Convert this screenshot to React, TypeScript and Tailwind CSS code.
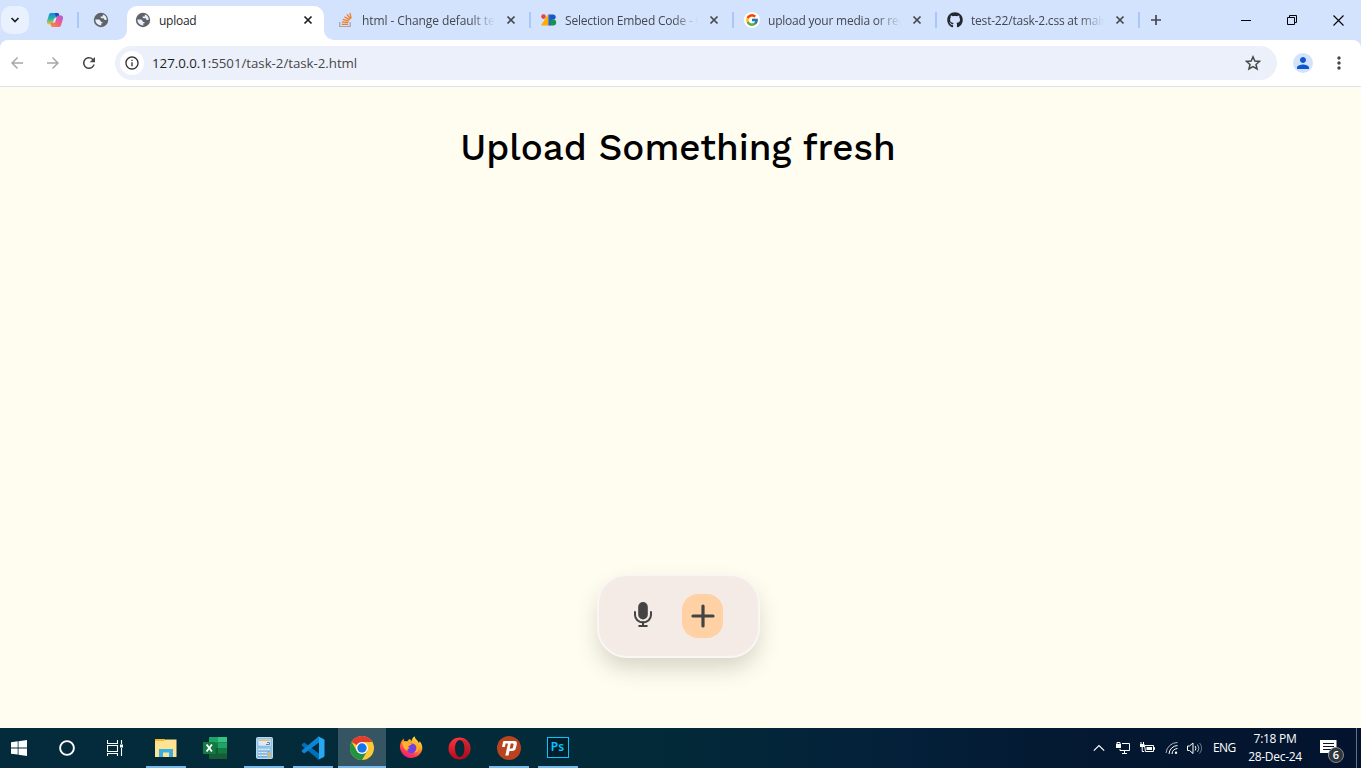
import type { ReactNode } from "react";
import { FcGoogle } from "react-icons/fc";
import { FaGithub } from "react-icons/fa";
import { MdArrowBack, MdArrowForward, MdRefresh, MdMoreVert, MdPerson, MdInfoOutline } from "react-icons/md";

const Globe = () => (
  <svg width="16" height="16" viewBox="0 0 16 16" className="shrink-0">
    <circle cx="8" cy="8" r="7.2" fill="#5f6368" />
    <path d="M9.900 2.500a5.800 5.800 0 0 1 3.900 5.300l-1.700.1-.9-.5-.5-1.200H8.400L7.600 5.500V4.600h2.100ZM2.300 7.600h4l1.500 1.500v1h1.700v1.200H8.300v2.300a5.900 5.900 0 0 1-6-6Z" fill="#e8eefa" />
  </svg>
);

const Close = ({ dark = false }: { dark?: boolean }) => (
  <svg width="16" height="16" viewBox="0 0 16 16" className="shrink-0">
    <path d="m4.500 4.500 7 7m0-7-7 7" stroke={dark ? "#1f1f1f" : "#45484d"} strokeWidth="1.700" />
  </svg>
);

const Copilot = () => (
  <svg width="18" height="16" viewBox="0 0 18 16">
    <defs>
      <linearGradient id="cpa" x1="0" y1="0" x2="0" y2="1"><stop stopColor="#1686ea" /><stop offset=".5" stopColor="#28b6a4" /><stop offset="1" stopColor="#f4c52c" /></linearGradient>
      <linearGradient id="cpb" x1="1" y1="0" x2="0" y2="1"><stop stopColor="#ad5be8" /><stop offset=".5" stopColor="#f35d83" /><stop offset="1" stopColor="#ff8c35" /></linearGradient>
    </defs>
    <path d="M5 1h6.200c1 0 1.500.7 1.800 1.600L13.600 5H11c-1.500 0-2 .9-2.400 2.100L7.400 11c-.4 1-.9 1.400-1.800 1.400H3.200C.8 12.400.8 10 1.200 8.500L3 2.700C3.300 1.700 4 1 5 1Z" fill="url(#cpa)" />
    <path d="M9 1h2.200c1 0 1.500.7 1.800 1.600L13.600 5H11C9.500 5 9.100 2 9 1Z" fill="#1b4ac1" />
    <path d="M13 15H6.800c-1 0-1.500-.7-1.800-1.600L4.400 11H7c1.500 0 2-.9 2.400-2.100L10.600 5c.4-1 .9-1.400 1.800-1.400h2.400c2.400 0 2.400 2.400 2 3.900L15 13.300c-.3 1-1 1.700-2 1.700Z" fill="url(#cpb)" />
    <path d="M8.200 6.200h2l-1.300 4h-2Z" fill="#d9e6fc" />
  </svg>
);

const StackOverflow = () => (
  <svg width="16" height="16" viewBox="0 0 16 16" fill="none">
    <path d="M1.700 10v4.500h10.500V10" stroke="#a2a5a9" strokeWidth="1.200" />
    <path d="M3.700 12.300h6.500M3.900 9.900l6.400.8M4.800 7.300l6 1.900M6.400 4.700l5.200 3.200M8.900 2.300l3.700 4.700M11.900.8l1.300 5.600" stroke="#f47b20" strokeWidth="1.250" />
  </svg>
);

const FontsMark = () => (
  <svg width="16" height="16" viewBox="0 0 16 16">
    <path d="M0 13.500 7 2.500h2v11Z" fill="#fbad03" />
    <circle cx="2.500" cy="4.600" r="2.300" fill="#ea4335" />
    <path d="M7.500 2.500h4v11h-4Z" fill="#1a63e8" />
    <circle cx="12" cy="5.100" r="2.700" fill="#1757c8" />
    <circle cx="12.200" cy="10.600" r="3" fill="#189448" />
  </svg>
);

const GoogleMark = () => (
  <span className="flex h-4 w-4 items-center justify-center rounded-full bg-white"><FcGoogle size={14} /></span>
);

const tabs: { icon: ReactNode; title: string; spacing: string }[] = [
  { icon: <StackOverflow />, title: "html - Change default text", spacing: "tracking-[-0.09px]" },
  { icon: <FontsMark />, title: "Selection Embed Code - G", spacing: "tracking-[-0.2px]" },
  { icon: <GoogleMark />, title: "upload your media or reco", spacing: "tracking-[-0.22px]" },
  { icon: <FaGithub size={16} color="#24292f" />, title: "test-22/task-2.css at main", spacing: "tracking-[-0.2px]" },
];

function TabStrip() {
  return (
    <div className="flex h-10 bg-[#d3e2fd] text-[12px]">
      <div className="flex w-[29px] items-center pl-px">
        <div className="flex h-7 w-7 items-center justify-center rounded-[10px] bg-[#eaf1fe]">
          <svg width="10" height="8" viewBox="0 0 10 8" fill="none"><path d="m1.500 2 3.500 3.500L8.500 2" stroke="#1f1f1f" strokeWidth="1.700" /></svg>
        </div>
      </div>
      <div className="flex w-[50px] items-center justify-between pl-[17px]">
        <Copilot /><span className="h-4 w-0.5 bg-[#a8c7fa]" />
      </div>
      <div className="flex w-[38px] items-center pl-[14px]"><Globe /></div>
      <div className="w-[10px] bg-white"><div className="h-10 rounded-br-[10px] bg-[#d3e2fd]" /></div>
      <div className="mt-1.5 flex w-[197px] items-center rounded-t-[10px] bg-white pb-[6px] pl-2 pr-2 text-[#1f1f1f]">
        <Globe />
        <span className="ml-2 grow pt-0.5 text-[12px] tracking-[-0.25px]">upload</span>
        <Close dark />
      </div>
      <div className="w-[10px] bg-white"><div className="h-10 rounded-bl-[10px] bg-[#d3e2fd]" /></div>
      <div className="-ml-1.5 flex">
        {tabs.map((tab) => (
          <div key={tab.title} className="flex w-[203px] items-center pl-[11px] text-[#45484d]">
            <span className="-ml-px mr-px flex w-4 shrink-0">{tab.icon}</span>
            <span className={`ml-[7px] w-[133px] overflow-hidden whitespace-nowrap pt-0.5 [mask-image:linear-gradient(to_right,black_108px,transparent_133px)] ${tab.spacing}`}>{tab.title}</span>
            <span className="ml-2"><Close /></span>
            <span className="ml-[10px] h-4 w-0.5 bg-[#a8c7fa]" />
          </div>
        ))}
      </div>
      <div className="flex w-8 items-center justify-center">
        <svg width="12" height="12" viewBox="0 0 12 12"><path d="M6 1v10M1 6h10" stroke="#45484d" strokeWidth="1.700" /></svg>
      </div>
      <div className="ml-auto flex w-[138px]">
        <span className="flex flex-1 items-center justify-center"><svg width="10" height="10"><path d="M0 5.500h10" stroke="#000" /></svg></span>
        <span className="flex flex-1 items-center justify-center"><svg width="10" height="10" fill="none" stroke="#000"><path d="M.5 2.500h7v7h-7ZM2.500 2V.5h7v7H8" /></svg></span>
        <span className="flex flex-1 items-center justify-center"><svg width="11" height="11"><path d="m.5.5 10 10m0-10-10 10" stroke="#000" strokeWidth="1.100" /></svg></span>
      </div>
    </div>
  );
}

function Toolbar() {
  return (
    <div className="h-[47px] bg-[#d3e2fd]">
      <div className="flex h-[47px] items-start rounded-t-[8px] border-b border-[#e0e2e5] bg-white pt-1.5">
        <div className="flex h-[34px] w-[115px] items-center pl-[8px]">
          <MdArrowBack size={18} color="#a6a8ab" />
          <MdArrowForward size={18} color="#a6a8ab" className="ml-[18px]" />
          <MdRefresh size={18} color="#44474a" className="ml-[18px]" />
        </div>
        <div className="flex h-[34px] w-[1162px] items-center rounded-full bg-[#ecf0fa] pl-[5px] pr-[15px]">
          <span className="flex h-6 w-6 items-center justify-center rounded-full bg-white"><MdInfoOutline size={16} color="#303134" /></span>
          <span className="ml-2 grow pt-0.5 text-[13.3px] tracking-[-0.04px] text-[#474747]"><span className="text-[#1f1f1f]">127.0.0.1</span>:5501/task-2/task-2.html</span>
          <svg width="18" height="18" viewBox="0 0 18 18" fill="none"><path d="m9 2.800 1.850 4.250 4.650.4-3.500 3.050 1.050 4.500L9 12.600 4.950 15 6 10.500 2.500 7.450l4.650-.4Z" stroke="#474747" strokeWidth="1.500" /></svg>
        </div>
        <div className="flex h-[34px] flex-1 items-center pl-4">
          <span className="flex h-5 w-5 items-center justify-center rounded-full bg-[#d3e3fd]"><MdPerson size={18} color="#0b57d0" /></span>
          <MdMoreVert size={20} color="#474747" className="ml-[16px]" />
        </div>
      </div>
    </div>
  );
}

function UploadPage() {
  return (
    <main className="flex h-[641px] flex-col items-center bg-[#fffdf0] pr-[5px]">
      <h1 className="mt-[37px] whitespace-nowrap font-['Work_Sans','Inter',sans-serif] text-[36.8px] font-medium leading-[48px] text-black">Upload Something fresh</h1>
      <div className="ml-px mt-[402px] flex h-[84px] w-[163px] rounded-[30px] border-2 border-[#faf6f3] bg-[#f5ebe6] pl-[34px] pt-[18px] shadow-[0_12px_22px_-2px_rgba(70,70,50,0.22)]">
        <svg width="20" height="28" viewBox="0 0 20 28" className="mt-[7px]" fill="none" stroke="#444" strokeWidth="2">
          <rect x="5.200" y="1" width="9.600" height="17.500" rx="4.800" fill="#444" stroke="none" />
          <path d="M2 11v3a8 7.500 0 0 0 16 0v-3" strokeLinecap="round" />
          <path d="M10 21v4M6.200 25h7.600" strokeLinecap="round" />
        </svg>
        <button className="ml-[29px] flex h-11 w-[41px] items-center justify-center rounded-[16px] bg-[#ffd1a5]" aria-label="Add">
          <svg width="24" height="24" viewBox="0 0 24 24" className="-mt-px"><path d="M12 2v20M2 12h20" stroke="#444" strokeWidth="3.200" strokeLinecap="round" /></svg>
        </button>
      </div>
    </main>
  );
}

const Explorer = () => (
  <svg width="22" height="20" viewBox="0 0 22 20">
    <path d="M0 1h10v3H0Z" fill="#f5ba25" /><path d="M0 3h9l1.500-1.500H21.500V19H0Z" fill="#ffe391" />
    <path d="M4 19v-8h14v8h-4v-4.500H8V19Z" fill="#38afe5" />
  </svg>
);
const Excel = () => (
  <svg width="24" height="22" viewBox="0 0 24 22">
    <path d="M6 0h9v11H6Z" fill="#21a366" /><path d="M15 0h9v5.500h-9Z" fill="#33c481" /><path d="M6 5.500h9V11H6Z" fill="#107c41" /><path d="M15 5.500h9V11h-9Z" fill="#21a366" />
    <path d="M6 11h18v11H6Z" fill="#185c37" /><path d="M15 11h9v5.500h-9Z" fill="#107c41" />
    <path d="M0 5h12.500v12H0Z" fill="#107c41" /><path d="m3.600 7.500 5.300 7M8.900 7.500l-5.300 7" stroke="#fff" strokeWidth="1.900" />
  </svg>
);
const Calculator = () => (
  <svg width="17" height="22" viewBox="0 0 17 22">
    <rect x=".5" y=".5" width="16" height="21" rx="1" fill="#91c3e6" stroke="#b9dbf2" />
    <path d="M2 2h13v7H2Z" fill="#d9ebf8" stroke="#8db8d8" strokeWidth=".6" /><path d="M3 3.300h11" stroke="#f2b34e" strokeWidth="1.200" /><path d="M10 7.500h3.500v-2H11" stroke="#5b83ab" fill="none" />
    <path d="M2.500 12.700h12M2.500 15.500h9M2.500 18.300h9" stroke="#e9f4fb" strokeWidth="1.800" strokeDasharray="2 1" /><path d="M2.500 14.100h12M2.500 16.900h9M2.500 19.700h9" stroke="#4d87b3" strokeWidth=".8" strokeDasharray="2 1" /><path d="M12.500 15.500h2v4.500h-2Z" fill="#f6ac42" />
  </svg>
);
const VsCode = () => (
  <svg width="24" height="24" viewBox="0 0 24 24">
    <path d="m1 8.300 1.500-1.400c.5-.4 1-.3 1.400 0L19 18.300V23L17.500 23.500 1 9.700c-.5-.4-.5-1 0-1.400Z" fill="#0070b8" />
    <path d="m1 15.700 1.500 1.400c.5.4 1 .3 1.400 0L19 5.700V1L17.500.5 1 14.300c-.5.4-.5 1 0 1.400Z" fill="#0c86d2" />
    <path d="M17.500 23.600c-.6.2-1 .1-1.500-.4.600.6 2 .2 2-1V1.800c0-1.100-1.300-1.600-2-.9.500-.5 1-.6 1.500-.4l5 2.400c.6.3 1 .8 1 1.400v15.500c0 .6-.4 1.100-1 1.400Z" fill="#27a9f1" />
  </svg>
);
const Chrome = () => (
  <svg width="24" height="24" viewBox="0 0 24 24">
    <circle cx="12" cy="12" r="12" fill="#fcc934" />
    <path d="M12 12 1.600 6A12 12 0 0 1 22.400 6H12Z" fill="#e33b2e" />
    <path d="M1.600 6A12 12 0 0 0 12 24L17.200 15 12 12 6.800 15Z" fill="#229342" />
    <circle cx="12" cy="12" r="6" fill="#fff" /><circle cx="12" cy="12" r="4.700" fill="#1a73e8" />
  </svg>
);
const Firefox = () => (
  <svg width="24" height="24" viewBox="0 0 24 24">
    <defs><linearGradient id="ff" x1=".8" y1="0" x2=".25" y2="1"><stop stopColor="#fff04a" /><stop offset=".4" stopColor="#ff9c25" /><stop offset=".75" stopColor="#ff3a52" /><stop offset="1" stopColor="#e31587" /></linearGradient></defs>
    <path d="M2.500 5 4.700 2.500 5 5l3.300.2C9.500 4 10 3.400 11 3.100L12.500 5.300c.5-2.300 1.400-4 3-5 .5 3 3.500 4 4.500 7l.5-2C23 8 23.600 10.300 23.200 13.500A11.300 11.300 0 1 1 2.500 5Z" fill="url(#ff)" />
    <circle cx="12.400" cy="12.400" r="5" fill="#7540df" />
    <path d="M3 6.500c3-1.800 5.300-.5 7 .7l3 .2c-.5 1.800-2.800 1.800-3.800 3.200l1.300 1.600c-2 .5-3 1.500-1.200 3-4-.8-5.300-5-6.300-8.700ZM13.500 5c5 1.500 6 8 1.600 11.500 4-.1 6.300-4.500 4.800-8Z" fill="#ffb12c" />
  </svg>
);
const Opera = () => (
  <svg width="24" height="23" viewBox="0 0 24 23">
    <defs><linearGradient id="op" x1="0" y1="0" x2="0" y2="1"><stop stopColor="#ff3440" /><stop offset="1" stopColor="#b9081b" /></linearGradient></defs>
    <path fillRule="evenodd" d="M11.500.5a11 11 0 1 0 0 22 11 11 0 1 0 0-22Zm.3 2.500c2.800 0 4.700 3.800 4.700 8.500s-1.900 8.500-4.700 8.500S7 16.200 7 11.500 9 3 11.800 3Z" fill="url(#op)" />
    <path d="M11.800 3c2.800 0 4.700 3.800 4.700 8.500s-1.900 8.500-4.700 8.500c3 1 5.500.3 7.200-1.200 4-4 4-10.600 0-14.600C17.300 2.700 14.800 2 11.800 3Z" fill="#8f1020" fillOpacity=".35" />
  </svg>
);
const Psiphon = () => (
  <svg width="24" height="24" viewBox="0 0 24 24">
    <circle cx="12" cy="12" r="12" fill="#b9421f" />
    <path d="M7.200 5h10.300c2.300 0 2.600 1.500 2.200 3.500l-.7 3.200c-.5 2.300-1.800 3.200-3.800 3.200h-2.700l-1 4.600H8.300l2.700-12H8.600L7.900 11H5l1-4.800C6.200 5.300 6.500 5 7.200 5Zm6.600 2.500-1.100 5h1.700c.9 0 1.300-.3 1.500-1.100l.7-3c.1-.6-.1-.9-.7-.9Z" fill="#fff" />
  </svg>
);
const Photoshop = () => (
  <span className="mb-0.5 mr-px flex h-[21px] w-[22px] items-center justify-center border border-[#00c8ff] bg-[#001e2b] pb-px font-['Noto_Sans'] text-[12px] font-semibold leading-none text-[#00c8ff]">Ps</span>
);

const apps: { name: string; icon: ReactNode; open: boolean; active?: boolean }[] = [
  { name: "explorer", icon: <Explorer />, open: true },
  { name: "excel", icon: <Excel />, open: false },
  { name: "calculator", icon: <Calculator />, open: true },
  { name: "vscode", icon: <VsCode />, open: true },
  { name: "chrome", icon: <Chrome />, open: true, active: true },
  { name: "firefox", icon: <Firefox />, open: false },
  { name: "opera", icon: <Opera />, open: false },
  { name: "psiphon", icon: <Psiphon />, open: true },
  { name: "photoshop", icon: <Photoshop />, open: true },
];

function Taskbar() {
  return (
    <footer className="flex h-10 bg-[linear-gradient(90deg,#032b3b_0%,#022a38_48%,#04203a_66%,#041831_80%,#03132e_100%)] text-[12px] text-white">
      <div className="flex w-[141px] items-center">
        <svg width="16" height="16" viewBox="0 0 16 16" fill="#fff" className="ml-[11px]"><path d="M0 2.200 6.700 1.300v6.200H0ZM7.500 1.200 16 0v7.500H7.500ZM0 8.400h6.700v6.200L0 13.700ZM7.500 8.400H16V16l-8.500-1.200Z" /></svg>
        <svg width="16" height="16" fill="none" className="ml-[32px]"><circle cx="8" cy="8" r="6.900" stroke="#fff" strokeWidth="1.900" /></svg>
        <svg width="17" height="16" fill="none" stroke="#fff" className="ml-[32px]"><path d="M.5 0v3.500h10V0M.5 5.500h10v6H.5ZM.5 16v-2.500h10V16M14.500 0v4M14.500 8v8" strokeWidth="1.100" /><path d="M13 4.500h3v3h-3Z" fill="#fff" stroke="none" /></svg>
      </div>
      <div className="flex">
        {apps.map((app) => (
          <div key={app.name} className="flex h-10 w-[49px] justify-end">
            <div className={`flex w-12 flex-col items-center ${app.active ? "bg-[#365562]" : ""}`}>
              <span className="flex h-[38px] items-center pt-[2px]">{app.icon}</span>
              <span className={`h-0.5 bg-[#76b9ed] ${app.open ? "" : "invisible"} ${app.active ? "w-full" : "w-10"}`} />
            </div>
          </div>
        ))}
      </div>
      <div className="ml-auto flex w-[269px] items-center">
        <svg width="12" height="8" fill="none" className="ml-px"><path d="m.8 6.700 5.200-5.200 5.200 5.200" stroke="#fff" strokeWidth="1.200" /></svg>
        <svg width="16" height="14" fill="none" stroke="#fff" className="ml-[10px]"><path d="M7 2.500h7.500v7H5V8M9.500 9.500v3M7 12.500h5M2 3V1.500h3V3" /><path d="M1 3h5v4H1Z" fill="#fff" stroke="none" /></svg>
        <svg width="16" height="13" fill="none" stroke="#fff" className="ml-2"><path d="M5.500 3.500h9v6h-8ZM14.500 5.500h1v2h-1M2 0v2M4.500 0v2M3.200 5v4.500h2" /><path d="M1 2h4.500v3H1Z" fill="#fff" stroke="none" /><path d="M7.500 5h5.500v3H7.500Z" fill="#fff" stroke="none" /></svg>
        <svg width="15" height="14" fill="none" stroke="#fff" className="ml-[10px]"><path d="M1 12A11.500 11.500 0 0 1 12.500 1.500" stroke="#a9b2bd" /><path d="M4 13A9 9 0 0 1 12.500 4.500M7 13A6 6 0 0 1 12.500 7.500" /><circle cx="11" cy="11.800" r="1.200" fill="#fff" stroke="none" /></svg>
        <svg width="18" height="14" fill="none" stroke="#fff" className="ml-[6px]"><path d="M1.500 5h2L7 2v10.500L3.500 9.500h-2ZM9.200 5q1.500 2.200 0 4.500" /><path d="M11.500 3.500q2.800 3.700 0 7.500" stroke="#a9b2bd" /><path d="M13.600 2q4 5.200 0 10.500" stroke="#6f7c8d" /></svg>
        <span className="ml-[9px] w-6 text-[12px] tracking-[-0.55px]">ENG</span>
        <div className="ml-[7px] w-[62px] whitespace-nowrap text-center text-[12px] leading-[18px] tracking-[-0.3px]"><div>7:18 PM</div><div>28-Dec-24</div></div>
        <div className="relative ml-[14px] h-6 w-6">
          <svg width="17" height="17" className="mt-1"><path d="M0 0h16.500v13H12L8.500 16.500V13H0Z" fill="#fff" /><path d="M3 3.500h11M3 6.500h11M3 9.500h8" stroke="#04162f" /></svg>
          <span className="absolute left-[8px] top-[11px] flex h-4 w-4 items-center justify-center rounded-full border border-[#85898e] bg-[#30363d] text-[11px] font-semibold">6</span>
        </div>
        <span className="ml-auto mr-[4px] h-10 w-px bg-[#65717f]" />
      </div>
    </footer>
  );
}

export default function App() {
  return (
    <div className="h-[768px] w-[1361px] overflow-hidden font-['Open_Sans','Noto_Sans',sans-serif]">
      <TabStrip /><Toolbar /><UploadPage /><Taskbar />
    </div>
  );
}
